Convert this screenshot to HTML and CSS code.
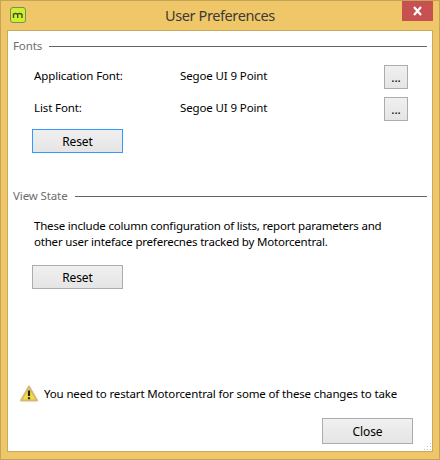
FILE: index.html
```html
<!DOCTYPE html>
<html lang="en">

<head>
    <meta charset="UTF-8">
    <meta name="viewport" content="width=device-width, initial-scale=1.0">
    <title>User Preferences</title>

    <link rel="stylesheet" href="styles.css">
</head>

<body>

    <div class="window">
        <div class="titlebar">
            <div class="title-left">
                <svg class="app-icon" width="16" height="16" viewBox="0 0 16 16">
                    <rect x="0.5" y="0.5" width="15" height="15" rx="2.5" fill="#cdf02c" stroke="#7d8a6a" />
                    <path d="M3.5 11V6.5M3.5 7.5Q3.5 6.5 5.2 6.5T7.7 7.5V11M7.7 7.5Q7.7 6.5 9.5 6.5T12 7.5V11" fill="none"
                        stroke="#45502a" stroke-width="1.4" />
                </svg>
            </div>
            <div class="title">User Preferences</div>
            <div class="title-right">
                <div class="close-x">
                    <svg width="11" height="10" viewBox="0 0 11 10">
                        <path d="M2 1L9 9M9 1L2 9" stroke="white" stroke-width="2.2" fill="none" />
                    </svg>
                </div>
            </div>
        </div>

        <div class="client">
            <div class="group-head">
                <span class="group-name">Fonts</span>
                <span class="group-line"></span>
            </div>

            <div class="font-row">
                <span class="font-label">Application Font:</span>
                <span class="font-value">Segoe UI 9 Point</span>
                <button class="btn btn-dots">...</button>
            </div>
            <div class="font-row">
                <span class="font-label">List Font:</span>
                <span class="font-value">Segoe UI 9 Point</span>
                <button class="btn btn-dots">...</button>
            </div>
            <button class="btn btn-reset btn-focus">Reset</button>

            <div class="group-head view-head">
                <span class="group-name">View State</span>
                <span class="group-line"></span>
            </div>

            <p class="desc">These include column configuration of lists, report parameters and<br>other user inteface preferecnes tracked by Motorcentral.</p>
            <button class="btn btn-reset">Reset</button>

            <div class="notice">
                <svg class="warn-icon" width="18" height="17" viewBox="0 0 18 17">
                    <path d="M9 1.5L17 15.5H1Z" fill="#f4dc3c" stroke="#d6b877" stroke-width="2" stroke-linejoin="round" />
                    <path d="M9 5.5V11" stroke="#222" stroke-width="2.2" />
                    <path d="M9 12.3V14.2" stroke="#222" stroke-width="2.2" />
                </svg>
                <span>You need to restart Motorcentral for some of these changes to take</span>
            </div>

            <div class="footer">
                <button class="btn btn-close">Close</button>
            </div>

            <svg class="grip" width="9" height="9" viewBox="0 0 9 9">
                <path d="M7 1h1v1H7zM4 4h1v1H4zM7 4h1v1H7zM1 7h1v1H1zM4 7h1v1H4zM7 7h1v1H7z" fill="#c4c4c4" />
            </svg>
        </div>
    </div>

</body>

</html>
```

FILE: styles.css
```css
body {
    margin: 0;
    background-color: #efc769;
    font-family: "Noto Sans", sans-serif;
    font-size: 11.5px;
    letter-spacing: -0.12px;
    color: #000;
}

.window {
    box-sizing: border-box;
    width: 440px;
    height: 460px;
    display: flex;
    flex-direction: column;
    background-color: #efc769;
    border: 1px solid #c4a557;
}

.titlebar {
    height: 29px;
    display: grid;
    grid-template-columns: 1fr auto 1fr;
    flex-shrink: 0;
}

.title-left {
    padding: 6px 0 0 9px;
}

.app-icon {
    display: block;
}

.title {
    font-size: 14.5px;
    letter-spacing: -0.4px;
    line-height: 28px;
    color: #3b3a36;
}

.title-right {
    display: flex;
    justify-content: flex-end;
    padding-right: 6px;
}

.close-x {
    width: 31px;
    height: 20px;
    display: flex;
    justify-content: center;
    align-items: center;
    background-color: #c75050;
}

.client {
    position: relative;
    flex: 1;
    display: flex;
    flex-direction: column;
    align-items: flex-start;
    margin: 0 6px 7px 6px;
    padding: 0 5px;
    background-color: white;
    border: 1px solid #c9aa5c;
}

.group-head {
    width: 100%;
    height: 16px;
    margin-top: 7px;
    display: flex;
    align-items: center;
    gap: 7px;
    box-sizing: border-box;
}

.group-name {
    color: #6d6d6d;
    line-height: 16px;
}

.group-line {
    flex: 1;
    height: 1px;
    background-color: #646464;
}

.font-row {
    width: 100%;
    height: 24px;
    margin-top: 8px;
    display: flex;
    align-items: center;
    padding-left: 21px;
    box-sizing: border-box;
}

.group-head + .font-row {
    margin-top: 11px;
}

.font-label {
    width: 146px;
    padding-bottom: 3px;
}

.font-value {
    width: 204px;
    padding-bottom: 3px;
}

.btn {
    box-sizing: border-box;
    font-family: inherit;
    font-size: 12px;
    letter-spacing: -0.12px;
    color: #000;
    padding: 0;
    border: 1px solid #acacac;
    border-radius: 0;
    background: linear-gradient(#f0f0f0, #e5e5e5);
}

.btn-dots {
    width: 24px;
    height: 24px;
}

.btn-reset {
    width: 91px;
    height: 24px;
    margin: 8px 0 0 19px;
}

.btn-focus {
    border-color: #3399ff;
}

.view-head {
    margin-top: 35px;
}

.desc {
    margin: 14px 0 15px 21px;
    line-height: 16px;
    letter-spacing: -0.2px;
}

.desc + .btn-reset {
    margin-top: 0;
}

.notice {
    margin-top: auto;
    display: flex;
    align-items: center;
    gap: 6px;
    padding-left: 7px;
    letter-spacing: -0.15px;
}

.warn-icon {
    flex-shrink: 0;
}

.footer {
    width: 100%;
    display: flex;
    justify-content: flex-end;
    padding: 16px 14px 7px 0;
    box-sizing: border-box;
}

.btn-close {
    width: 91px;
    height: 26px;
}

.grip {
    position: absolute;
    right: 0;
    bottom: 0;
}
```
